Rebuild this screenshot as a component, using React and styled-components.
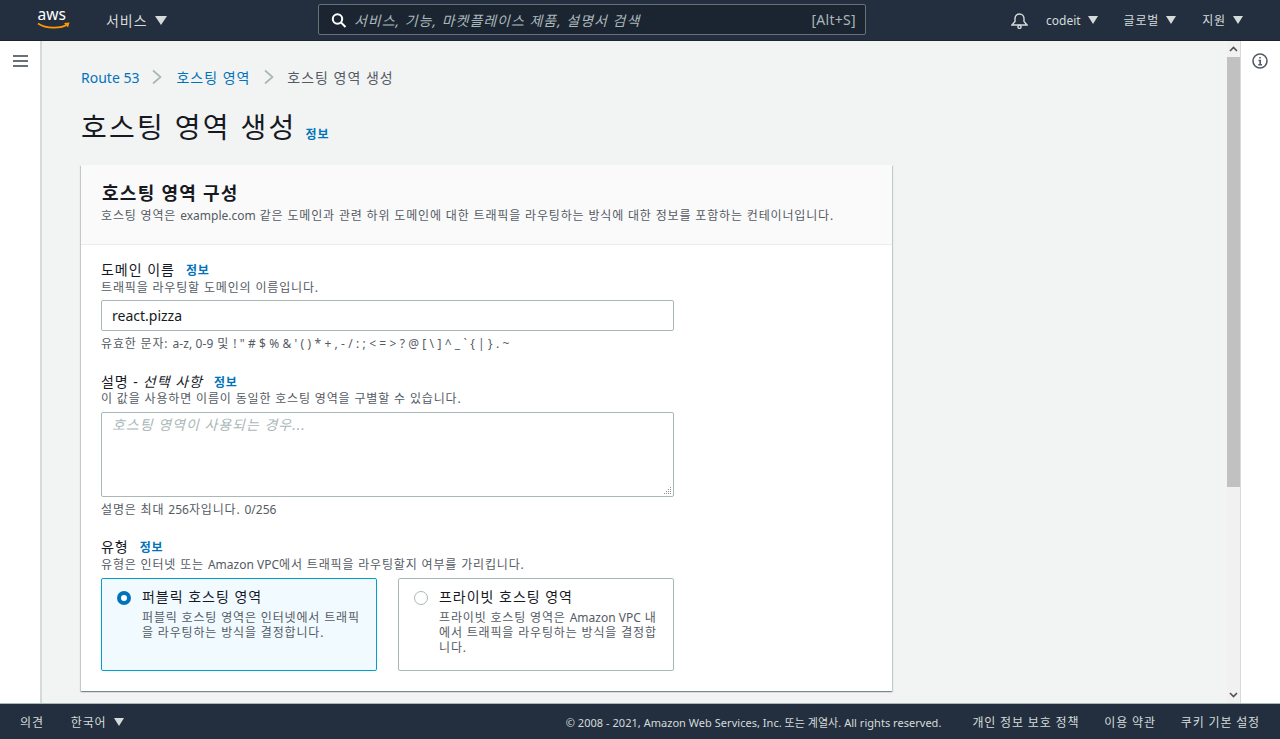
import React from "react";
import styled, { createGlobalStyle } from "styled-components";

const Global = createGlobalStyle`
  html, body { margin: 0; height: 100%; overflow: hidden; }
  #root { height: 100%; }
  * { box-sizing: border-box; letter-spacing: .07em; }
  body { font-family: "Noto Sans", "Noto Sans CJK KR", sans-serif; color: #16191f; }
`;

const Page = styled.div`
  width: 1280px; height: 739px; display: flex; flex-direction: column; overflow: hidden;
`;
const Lat = styled.span`letter-spacing: ${p => p.$ls || "0"};`;
const TopBar = styled.header`
  height: 41px; flex: none; background: #232f3e; display: flex; align-items: center;
  color: #d5dbdb; font-size: 14px; padding-left: 37px;
  border-bottom: 1px solid #1b2532;
`;
const Logo = styled.svg`width: 34px; height: 24px; flex: none; margin-top: -2px; overflow: visible;`;
const LogoText = styled.text`letter-spacing: 0; font-family: "Noto Sans", sans-serif; font-size: 15.5px; fill: #fff;`;
const ServiceMenu = styled.div`
  display: flex; align-items: center; gap: 7px; margin-left: 35px; width: 212px; font-size: 14px; color: #d5dbdb;
`;
const Caret = styled.span`
  width: 0; height: 0; flex: none;
  border-left: ${p => p.$s || 5}px solid transparent;
  border-right: ${p => p.$s || 5}px solid transparent;
  border-top: ${p => (p.$s || 5) + 3}px solid #d5dbdb;
`;
const Search = styled.div`
  width: 548px; height: 31px; background: #1b2532; border: 1px solid #687078; border-radius: 2px;
  display: flex; align-items: center; padding: 0 9px 0 12px; margin-top: -1px;
`;
const SearchIcon = styled.svg`width: 16px; height: 16px; flex: none; display: block;`;
const SearchText = styled.span`
  flex: 1; margin-left: 7px; font-style: italic; color: #aab7b8; font-size: 14px;
`;
const Hint = styled.span`color: #aab7b8; font-size: 14px; letter-spacing: .3px;`;
const TopRight = styled.div`
  margin-left: auto; display: flex; align-items: center; height: 100%; padding-right: 37px;
`;
const Bell = styled.svg`width: 17px; height: 17px; flex: none; display: block;`;
const TopItem = styled.div`
  display: flex; align-items: center; gap: 7px; font-size: 12px; margin-left: ${p => p.$ml}px; color: #d5dbdb;
`;
const Middle = styled.div`flex: 1; min-height: 0; display: flex;`;
const LeftRail = styled.div`
  width: 42px; flex: none; background: #fff; border-right: 2px solid #d5dbdb; padding: 14px 0 0 13px;
`;
const RailIcon = styled.svg`display: block;`;
const Main = styled.main`
  flex: 1; min-width: 0; background: #f2f3f3; padding: 26px 0 0 39px; overflow: hidden;
`;
const Scrollbar = styled.div`
  width: 13px; flex: none; background: #f1f1f1; display: flex; flex-direction: column;
`;
const ScrollBtn = styled.div`
  height: 16px; flex: none; display: flex; align-items: center; justify-content: center;
`;
const Thumb = styled.div`height: 430px; background: #c1c1c1; flex: none;`;
const Spacer = styled.div`flex: 1;`;
const RightRail = styled.div`
  width: 40px; flex: none; background: #fff; border-left: 1px solid #d5dbdb; padding: 12px 0 0 11px;
`;
const Crumbs = styled.nav`
  display: flex; align-items: center; font-size: 14px; height: 20px; color: #545b64;
`;
const CrumbLink = styled.span`color: #0073bb;`;
const CrumbSep = styled.svg`width: 12px; height: 16px; margin: 0 ${p => p.$r}px 0 ${p => p.$l}px; flex: none;`;
const TitleRow = styled.div`
  display: flex; align-items: flex-end; margin-top: 20px; height: 40px;
`;
const Title = styled.h1`
  margin: 0; font-size: 28px; font-weight: 400; line-height: 40px; color: #16191f; letter-spacing: 2.3px;
`;
const Info = styled.span`
  color: #0073bb; font-size: 12px; font-weight: 700; margin-left: ${p => p.$ml || 11}px;
  position: relative; top: ${p => p.$t || 0}px;
`;
const Card = styled.section`
  width: 811px; height: 526px; margin-top: 18px; background: #fff;
  box-shadow: 0 1px 1px 0 rgba(0,28,36,.3), 1px 1px 1px 0 rgba(0,28,36,.15), -1px 1px 1px 0 rgba(0,28,36,.15);
`;
const CardHead = styled.div`
  height: 80px; background: #fafafa; border-bottom: 1px solid #eaeded; padding: 15px 20px 0 21px;
`;
const CardTitle = styled.h2`
  margin: 0; font-size: 18px; line-height: 26px; font-weight: 700; color: #16191f;
`;
const CardDesc = styled.p`
  margin: 2px 0 0 -1px; font-size: 12px; line-height: 16px; color: #545b64;
`;
const CardBody = styled.div`padding: 15px 20px 0 20px; display: flex; flex-direction: column;`;
const Field = styled.div`width: 573px; margin-bottom: ${p => p.$mb}px;`;
const Label = styled.div`
  font-size: 14px; line-height: 20px; color: #16191f; display: flex; align-items: center;
`;
const Optional = styled.span`font-style: italic; margin-left: 4px;`;
const Desc = styled.div`
  font-size: 12px; line-height: 14px; color: #545b64; margin-top: ${p => p.$mt || 0}px;
`;
const Input = styled.div`
  height: 31px; margin-top: 5px; border: 1px solid #aab7b8; border-radius: 2px; background: #fff;
  padding: 0 10px; font-size: 14px; line-height: 29px; color: #16191f; letter-spacing: 0;
`;
const TextArea = styled.div`
  height: 85px; margin-top: 6px; border: 1px solid #aab7b8; border-radius: 2px; background: #fff;
  padding: 2px 10px; font-size: 14px; line-height: 20px; color: #aab7b8; font-style: italic; position: relative;
`;
const Grip = styled.svg`position: absolute; right: 1px; bottom: 1px; width: 9px; height: 9px;`;
const Constraint = styled.div`
  font-size: 12px; line-height: 16px; margin-top: 5px; color: #545b64;
`;
const Tiles = styled.div`display: grid; grid-template-columns: 276px 276px; gap: 21px; margin-top: 6px;`;
const Tile = styled.div`
  height: 93px; border-radius: 2px; padding: 10px 14px 10px 15px; display: flex; gap: 11px;
  border: 1px solid ${p => (p.$on ? "#00a1c9" : "#aab7b8")};
  background: ${p => (p.$on ? "#f1faff" : "#fff")};
`;
const Radio = styled.span`
  width: 14px; height: 14px; border-radius: 50%; flex: none; margin-top: 2px; background: #fff;
  border: ${p => (p.$on ? "4px solid #0073bb" : "1px solid #aab7b8")};
`;
const TileBody = styled.div`min-width: 0; flex: 1;`;
const TileTitle = styled.div`font-size: 14px; line-height: 16px; color: #16191f;`;
const TileDesc = styled.div`
  font-size: 12px; line-height: 15px; color: #545b64; margin-top: 5px; word-break: break-all;
`;
const Footer = styled.footer`
  height: 36px; flex: none; background: #232f3e; border-top: 1px solid #aab7b8;
  display: flex; align-items: center; color: #d5dbdb; font-size: 12px; padding: 0 20px;
`;
const FootLang = styled.div`display: flex; align-items: center; gap: 8px; margin-left: 27px;`;
const Copy = styled.span`margin-left: auto; font-size: 11px; color: #d5dbdb; letter-spacing: .03px;`;
const FootLink = styled.span`margin-left: ${p => p.$ml}px;`;

const Sep = ({ l, r }) => (
  <CrumbSep $l={l} $r={r} viewBox="0 0 12 16" fill="none" stroke="#aab7b8" strokeWidth="1.7">
    <path d="M2 1.5 9.5 8 2 14.5" />
  </CrumbSep>
);

const Chevron = ({ up }) => (
  <svg width="9" height="6" viewBox="0 0 9 6" fill="none" stroke="#505050" strokeWidth="1.6">
    <path d={up ? "M1 5 4.5 1.5 8 5" : "M1 1 4.5 4.5 8 1"} />
  </svg>
);

export default function App() {
  return (
    <Page>
      <Global />
      <TopBar>
        <Logo viewBox="0 0 34 24">
          <LogoText x="0.5" y="13">aws</LogoText>
          <path d="M1 16.5C9 22 24 22 31 17" fill="none" stroke="#f90" strokeWidth="1.7" />
          <path d="M27 16 32.5 15.5 31 20.5" fill="#f90" />
        </Logo>
        <ServiceMenu>서비스 <Caret $s={6} /></ServiceMenu>
        <Search>
          <SearchIcon viewBox="0 0 16 16" fill="none" stroke="#fff" strokeWidth="2">
            <circle cx="6.5" cy="7" r="4.7" />
            <path d="m10 10.5 4.5 4.5" />
          </SearchIcon>
          <SearchText>서비스, 기능, 마켓플레이스 제품, 설명서 검색</SearchText>
          <Hint>[Alt+S]</Hint>
        </Search>
        <TopRight>
          <Bell viewBox="0 0 17 17" fill="none" stroke="#d5dbdb" strokeWidth="1.4">
            <path d="M1 13 4 9.5V6.5a4.5 4.5 0 0 1 9 0v3L16 13Z" />
            <circle cx="8.5" cy="14.8" r="1.6" />
          </Bell>
          <TopItem $ml={18}><Lat>codeit</Lat> <Caret /></TopItem>
          <TopItem $ml={26}>글로벌 <Caret /></TopItem>
          <TopItem $ml={26}>지원 <Caret /></TopItem>
        </TopRight>
      </TopBar>
      <Middle>
        <LeftRail>
          <RailIcon width="15" height="12" viewBox="0 0 15 12" fill="#687078">
            <rect y="0" width="15" height="2" />
            <rect y="5" width="15" height="2" />
            <rect y="10" width="15" height="2" />
          </RailIcon>
        </LeftRail>
        <Main>
          <Crumbs>
            <CrumbLink><Lat>Route 53</Lat></CrumbLink>
            <Sep l={12} r={13} />
            <CrumbLink>호스팅 영역</CrumbLink>
            <Sep l={13} r={12} />
            <span>호스팅 영역 생성</span>
          </Crumbs>
          <TitleRow>
            <Title>호스팅 영역 생성</Title>
            <Info $t={-4} $ml={9}>정보</Info>
          </TitleRow>
          <Card>
            <CardHead>
              <CardTitle>호스팅 영역 구성</CardTitle>
              <CardDesc>호스팅 영역은 <Lat>example.com</Lat> 같은 도메인과 관련 하위 도메인에 대한 트래픽을 라우팅하는 방식에 대한 정보를 포함하는 컨테이너입니다.</CardDesc>
            </CardHead>
            <CardBody>
              <Field $mb={20}>
                <Label>도메인 이름<Info $t={1}>정보</Info></Label>
                <Desc $mt={1}>트래픽을 라우팅할 도메인의 이름입니다.</Desc>
                <Input>react.pizza</Input>
                <Constraint>유효한 문자: <Lat $ls=".1px">a-z, 0-9</Lat> 및 <Lat $ls=".1px">! " # $ % &amp; ' ( ) * + , - / : ; &lt; = &gt; ? @ [ \ ] ^ _ ` {"{"} | {"}"} . ~</Lat></Constraint>
              </Field>
              <Field $mb={19}>
                <Label>설명 -<Optional>선택 사항</Optional><Info $t={1}>정보</Info></Label>
                <Desc>이 값을 사용하면 이름이 동일한 호스팅 영역을 구별할 수 있습니다.</Desc>
                <TextArea>
                  호스팅 영역이 사용되는 경우...
                  <Grip viewBox="0 0 9 9" fill="#8a9496">
                    <rect x="7" y="1" width="1" height="1" />
                    <rect x="5" y="3" width="1" height="1" />
                    <rect x="7" y="3" width="1" height="1" />
                    <rect x="3" y="5" width="1" height="1" />
                    <rect x="5" y="5" width="1" height="1" />
                    <rect x="7" y="5" width="1" height="1" />
                    <rect x="1" y="7" width="1" height="1" />
                    <rect x="3" y="7" width="1" height="1" />
                    <rect x="5" y="7" width="1" height="1" />
                    <rect x="7" y="7" width="1" height="1" />
                  </Grip>
                </TextArea>
                <Constraint>설명은 최대 <Lat>256</Lat>자입니다. <Lat>0/256</Lat></Constraint>
              </Field>
              <Field $mb={0}>
                <Label>유형<Info $t={1}>정보</Info></Label>
                <Desc $mt={1}>유형은 인터넷 또는 <Lat>Amazon VPC</Lat>에서 트래픽을 라우팅할지 여부를 가리킵니다.</Desc>
                <Tiles>
                  <Tile $on>
                    <Radio $on />
                    <TileBody>
                      <TileTitle>퍼블릭 호스팅 영역</TileTitle>
                      <TileDesc>퍼블릭 호스팅 영역은 인터넷에서 트래픽<br />을 라우팅하는 방식을 결정합니다.</TileDesc>
                    </TileBody>
                  </Tile>
                  <Tile>
                    <Radio />
                    <TileBody>
                      <TileTitle>프라이빗 호스팅 영역</TileTitle>
                      <TileDesc>프라이빗 호스팅 영역은 <Lat>Amazon VPC</Lat> 내<br />에서 트래픽을 라우팅하는 방식을 결정합<br />니다.</TileDesc>
                    </TileBody>
                  </Tile>
                </Tiles>
              </Field>
            </CardBody>
          </Card>
        </Main>
        <Scrollbar>
          <ScrollBtn><Chevron up /></ScrollBtn>
          <Thumb />
          <Spacer />
          <ScrollBtn><Chevron /></ScrollBtn>
        </Scrollbar>
        <RightRail>
          <RailIcon width="16" height="16" viewBox="0 0 16 16" fill="none" stroke="#545b64" strokeWidth="1.6">
            <circle cx="8" cy="8" r="7" />
            <path d="M6.5 7.5H8.2V11.8M6.3 11.8H10" />
            <path d="M7.2 4h1.6v1.6H7.2Z" fill="#545b64" stroke="none" />
          </RailIcon>
        </RightRail>
      </Middle>
      <Footer>
        <span>의견</span>
        <FootLang>한국어 <Caret /></FootLang>
        <Copy>© 2008 - 2021, Amazon Web Services, Inc. 또는 계열사. All rights reserved.</Copy>
        <FootLink $ml={31}>개인 정보 보호 정책</FootLink>
        <FootLink $ml={25}>이용 약관</FootLink>
        <FootLink $ml={25}>쿠키 기본 설정</FootLink>
      </Footer>
    </Page>
  );
}
